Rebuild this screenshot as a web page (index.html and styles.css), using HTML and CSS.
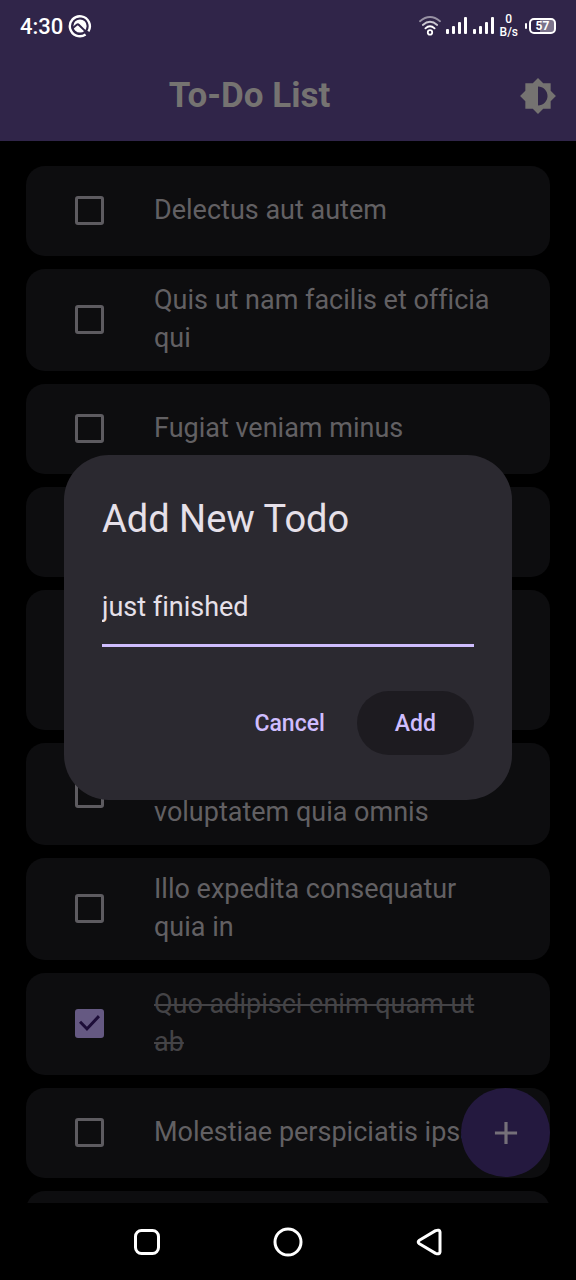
FILE: index.html
```html
<!DOCTYPE html>
<html lang="en">
<head>
<meta charset="utf-8">
<meta name="viewport" content="width=device-width, initial-scale=1">
<title>To-Do List</title>
<link rel="stylesheet" href="styles.css">
</head>
<body>
<div class="app">
  <div class="status">
    <span class="clock">4:30</span>
    <svg width="24" height="24" viewBox="0 0 24 24" aria-hidden="true">
      <path d="M17.600 20.400A10 10 0 1 1 20.400 17.400" fill="none" stroke="#fff" stroke-width="2.400"/>
      <circle cx="12" cy="12" r="6.600" fill="#fff"/>
      <path d="M4 14.800L9 10.600Q10 10 11 11L18.600 18.400" fill="none" stroke="#302549" stroke-width="2"/>
    </svg>
    <div class="indicators">
      <svg width="22" height="20" viewBox="0 0 22 20" fill="none" stroke="#fff" stroke-width="1.800" stroke-linecap="round" aria-hidden="true">
        <path d="M1 5.200Q11-3.200 21 5.200" opacity=".5"/>
        <path d="M3.800 9Q11 2.600 18.200 9" opacity=".75"/>
        <path d="M6.400 12.400Q11 8 15.600 12.400"/>
        <circle cx="11" cy="16.400" r="2.200"/>
      </svg>
      <svg width="22" height="18" viewBox="0 0 22 18" fill="#fff" aria-hidden="true">
        <rect x="0" y="12" width="3" height="5" rx="1"/><rect x="6" y="9" width="3" height="8" rx="1"/><rect x="12" y="5" width="3" height="12" rx="1"/><rect x="18" y="0" width="3" height="17" rx="1"/>
      </svg>
      <svg width="22" height="18" viewBox="0 0 22 18" fill="#fff" aria-hidden="true">
        <rect x="0" y="12" width="3" height="5" rx="1"/><rect x="6" y="9" width="3" height="8" rx="1"/><rect x="12" y="5" width="3" height="12" rx="1"/><rect x="18" y="0" width="3" height="17" rx="1"/>
      </svg>
      <span class="speed"><span>0</span><span>B/s</span></span>
      <span class="battery"><span class="battery-cell">57</span></span>
    </div>
  </div>
  <header class="appbar">
    <h1 class="title">To-Do List</h1>
    <button class="theme" type="button" aria-label="Toggle theme">
      <svg width="38" height="38" viewBox="0 0 24 24" fill="#757371" aria-hidden="true">
        <path fill-rule="evenodd" d="M20 15.310L23.310 12 20 8.690V4h-4.690L12 .690 8.690 4H4v4.690L.690 12 4 15.310V20h4.690L12 23.310 15.310 20H20ZM12 18V6c3.310 0 6 2.690 6 6s-2.690 6-6 6Z"/>
      </svg>
    </button>
  </header>
  <main class="content">
    <ul class="list">
      <li><label class="card"><input class="check" type="checkbox"><span class="text">Delectus aut autem</span></label></li>
      <li><label class="card"><input class="check" type="checkbox"><span class="text">Quis ut nam facilis et officia qui</span></label></li>
      <li><label class="card"><input class="check" type="checkbox"><span class="text">Fugiat veniam minus</span></label></li>
      <li><label class="card"><input class="check" type="checkbox"><span class="text">Et porro tempora</span></label></li>
      <li><label class="card"><input class="check" type="checkbox"><span class="text">Laboriosam mollitia et enim quasi adipisci quia provident illum</span></label></li>
      <li><label class="card"><input class="check" type="checkbox"><span class="text">Qui ullam ratione quibusdam voluptatem quia omnis</span></label></li>
      <li><label class="card"><input class="check" type="checkbox"><span class="text">Illo expedita consequatur quia in</span></label></li>
      <li><label class="card"><input class="check" type="checkbox" checked><span class="text">Quo adipisci enim quam ut ab</span></label></li>
      <li><label class="card"><input class="check" type="checkbox"><span class="text">Molestiae perspiciatis ipsam</span></label></li>
      <li class="card"></li>
    </ul>
    <button class="fab" type="button" aria-label="Add todo">
      <svg width="38" height="38" viewBox="0 0 24 24" fill="#757079" aria-hidden="true"><path d="M19 13h-6v6h-2v-6H5v-2h6V5h2v6h6Z"/></svg>
    </button>
  </main>
  <nav class="navbar">
    <button class="nav-key" type="button" aria-label="Recent apps">
      <svg width="30" height="30" viewBox="0 0 30 30" fill="none" stroke="#fff" stroke-width="3" aria-hidden="true"><rect x="3.500" y="3.500" width="23" height="23" rx="6"/></svg>
    </button>
    <button class="nav-key" type="button" aria-label="Home">
      <svg width="30" height="30" viewBox="0 0 30 30" fill="none" stroke="#fff" stroke-width="3" aria-hidden="true"><circle cx="15" cy="15" r="13"/></svg>
    </button>
    <button class="nav-key" type="button" aria-label="Back">
      <svg width="30" height="30" viewBox="0 0 30 30" fill="none" stroke="#fff" stroke-width="3" stroke-linejoin="round" aria-hidden="true"><path d="M5.400 13.200L21.600 3.600Q25.600 2.200 26 5V25Q25.600 27.800 21.600 26.400L5.400 16.800Q3 15 5.400 13.200Z"/></svg>
    </button>
  </nav>
  <div class="overlay">
    <form class="dialog" role="dialog" aria-labelledby="dialog-title">
      <h2 class="dialog-title" id="dialog-title">Add New Todo</h2>
      <input class="field" type="text" value="just finished" aria-labelledby="dialog-title">
      <div class="actions">
        <button class="btn" type="button">Cancel</button>
        <button class="btn btn-raised" type="button">Add</button>
      </div>
    </form>
  </div>
</div>
</body>
</html>
```

FILE: styles.css
```css
* { box-sizing: border-box; }

body {
  margin: 0;
  background: #000;
  font-family: Roboto, "Liberation Sans", sans-serif;
  font-variant-ligatures: none;
}

button {
  border: 0;
  padding: 0;
  background: none;
  font: inherit;
  color: inherit;
}

svg { display: block; }

.app {
  position: relative;
  display: flex;
  flex-direction: column;
  height: 100vh;
  overflow: hidden;
}

/* System status bar */
.status {
  display: flex;
  flex: none;
  align-items: center;
  gap: 5px;
  height: 51px;
  padding: 0 20px;
  background: #302549;
  color: #fff;
}

.clock {
  font-size: 22px;
  font-weight: 500;
  line-height: 28px;
  padding-top: 2px;
}

.indicators {
  display: flex;
  align-items: center;
  gap: 5px;
  margin-left: auto;
}

.speed {
  display: flex;
  flex-direction: column;
  align-items: center;
  font-size: 12px;
  font-weight: 500;
  line-height: 13px;
}

.battery {
  display: flex;
  align-items: center;
  gap: 2px;
  padding-left: 2px;
}

.battery::before {
  content: "";
  width: 2px;
  height: 6px;
  border-radius: 1px;
  background: #fff;
}

.battery-cell {
  width: 27px;
  border: 2px solid #fff;
  border-radius: 5px;
  background: linear-gradient(90deg, #302549 40%, #7b738b 40%);
  font-size: 12px;
  font-weight: 700;
  line-height: 12px;
  text-align: center;
}

/* App bar */
.appbar {
  display: flex;
  flex: none;
  align-items: center;
  height: 90px;
  background: #302549;
}

.title {
  flex: 1;
  margin: 0;
  color: #757371;
  font-size: 35px;
  font-weight: 700;
  line-height: 44px;
  text-align: center;
}

.theme {
  display: grid;
  place-items: center;
  width: 77px;
  height: 77px;
}

/* Todo list */
.content {
  position: relative;
  flex: 1;
  min-height: 0;
  overflow: hidden;
}

.list {
  display: flex;
  flex-direction: column;
  gap: 13px;
  margin: 0;
  padding: 25px 26px;
  list-style: none;
}

.card {
  display: flex;
  align-items: center;
  gap: 50px;
  min-height: 90px;
  padding: 12px 46px 14px 49px;
  border-radius: 19px;
  background: #0d0d0f;
}

.text {
  flex: 1;
  color: #626063;
  font-size: 27px;
  line-height: 38px;
}

.check {
  appearance: none;
  display: grid;
  flex: none;
  place-items: center;
  width: 29px;
  height: 29px;
  margin: 0;
  border: 3px solid #5d5b60;
  border-radius: 3px;
}

.check:checked {
  border-color: #655982;
  background: #655982;
}

.check:checked::after {
  content: "";
  width: 21px;
  height: 16px;
  background: #1d0d38;
  clip-path: polygon(0 49%, 10% 36%, 38% 74%, 90% 0, 100% 14%, 38% 100%);
}

.check:checked + .text {
  color: #444346;
  text-decoration: line-through;
  text-decoration-thickness: 2px;
}

.fab {
  position: absolute;
  right: 26px;
  bottom: 26px;
  display: grid;
  place-items: center;
  width: 89px;
  height: 89px;
  border-radius: 50%;
  background: #24193f;
}

/* System navigation */
.navbar {
  display: flex;
  flex: none;
  justify-content: center;
  height: 77px;
  background: #000;
}

.nav-key {
  display: grid;
  place-items: center;
  width: 141px;
}

/* Dialog */
.overlay {
  position: absolute;
  inset: 51px 0 77px;
  display: grid;
  align-items: center;
  padding: 0 64px;
}

.dialog {
  display: flex;
  flex-direction: column;
  padding: 38px;
  border-radius: 45px;
  background: #2b2930;
}

.dialog-title {
  margin: 0 0 25px;
  color: #e6e0e9;
  font-size: 38px;
  font-weight: 400;
  line-height: 52px;
}

.field {
  width: 100%;
  height: 77px;
  margin-bottom: 38px;
  padding: 0;
  border: 0;
  border-bottom: 3px solid #cfbdfe;
  border-radius: 0;
  outline: 0;
  background: none;
  color: #e6e0e9;
  font: 27px/38px Roboto, "Liberation Sans", sans-serif;
  font-variant-ligatures: none;
}

.actions {
  display: flex;
  align-items: center;
  justify-content: flex-end;
  gap: 13px;
  height: 77px;
}

.btn {
  height: 64px;
  padding: 0 19px;
  border-radius: 32px;
  color: #cfbdfe;
  font-size: 23px;
  font-weight: 500;
}

.btn-raised {
  padding: 0 38px;
  background: #1d1b20;
}
```
